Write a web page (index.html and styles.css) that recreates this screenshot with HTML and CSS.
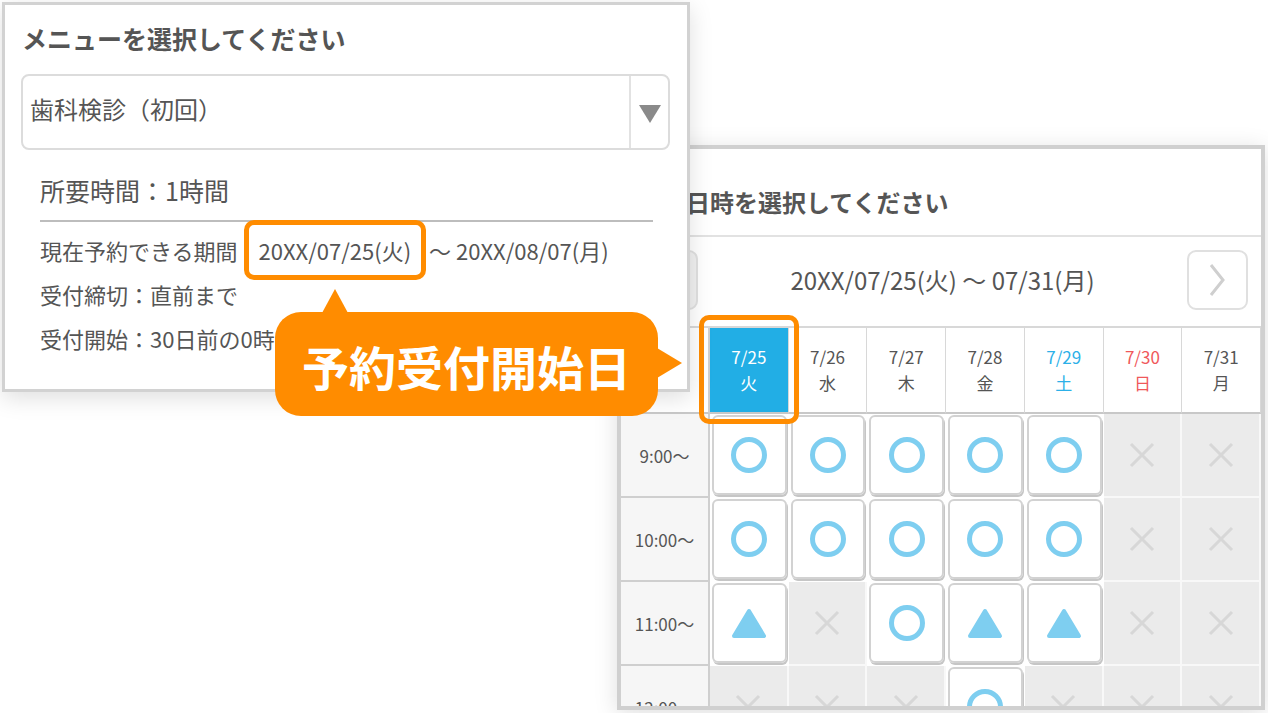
FILE: index.html
```html
<!DOCTYPE html>
<html lang="ja">
<head>
    <meta charset="UTF-8">
    <meta name="viewport" content="width=device-width, initial-scale=1.0">
    <title>予約受付開始日</title>
    <link rel="stylesheet" href="styles.css">
</head>
<body>
    <svg class="defs" width="0" height="0">
        <symbol id="maru" viewBox="0 0 40 40"><circle cx="20" cy="20" r="15.5" fill="none" stroke="#7ecef0" stroke-width="5"/></symbol>
        <symbol id="sankaku" viewBox="0 0 36 32"><path d="M18 4 L33 29 L3 29 Z" fill="#7ecef0" stroke="#7ecef0" stroke-width="4" stroke-linejoin="round"/></symbol>
        <symbol id="batsu" viewBox="0 0 26 26"><path d="M2 2 L24 24 M24 2 L2 24" stroke="#d7d7d7" stroke-width="3" fill="none"/></symbol>
    </svg>

    <div class="canvas">
        <!-- 日時選択 -->
        <section class="panel schedule">
            <h2 class="schedule-title">日時を選択してください</h2>
            <div class="week-nav">
                <button class="nav-btn prev" disabled>
                    <svg width="18" height="34" viewBox="0 0 18 34"><polyline points="15,2 3,17 15,32" fill="none" stroke="#d0d0d0" stroke-width="3"/></svg>
                </button>
                <span class="week-range">20XX/07/25(火) 〜 07/31(月)</span>
                <button class="nav-btn next">
                    <svg width="18" height="34" viewBox="0 0 18 34"><polyline points="3,2 15,17 3,32" fill="none" stroke="#cfcfcf" stroke-width="3"/></svg>
                </button>
            </div>

            <div class="grid">
                <div class="corner"></div>
                <div class="day selected">7/25<br>火</div>
                <div class="day">7/26<br>水</div>
                <div class="day">7/27<br>木</div>
                <div class="day">7/28<br>金</div>
                <div class="day sat">7/29<br>土</div>
                <div class="day sun">7/30<br>日</div>
                <div class="day">7/31<br>月</div>

                <div class="time">9:00〜</div>
                <div class="slot on"><div class="card"><svg class="ico"><use href="#maru"/></svg></div></div>
                <div class="slot on"><div class="card"><svg class="ico"><use href="#maru"/></svg></div></div>
                <div class="slot on"><div class="card"><svg class="ico"><use href="#maru"/></svg></div></div>
                <div class="slot on"><div class="card"><svg class="ico"><use href="#maru"/></svg></div></div>
                <div class="slot on"><div class="card"><svg class="ico"><use href="#maru"/></svg></div></div>
                <div class="slot off"><svg class="x"><use href="#batsu"/></svg></div>
                <div class="slot off"><svg class="x"><use href="#batsu"/></svg></div>

                <div class="time">10:00〜</div>
                <div class="slot on"><div class="card"><svg class="ico"><use href="#maru"/></svg></div></div>
                <div class="slot on"><div class="card"><svg class="ico"><use href="#maru"/></svg></div></div>
                <div class="slot on"><div class="card"><svg class="ico"><use href="#maru"/></svg></div></div>
                <div class="slot on"><div class="card"><svg class="ico"><use href="#maru"/></svg></div></div>
                <div class="slot on"><div class="card"><svg class="ico"><use href="#maru"/></svg></div></div>
                <div class="slot off"><svg class="x"><use href="#batsu"/></svg></div>
                <div class="slot off"><svg class="x"><use href="#batsu"/></svg></div>

                <div class="time">11:00〜</div>
                <div class="slot on"><div class="card"><svg class="tri"><use href="#sankaku"/></svg></div></div>
                <div class="slot off"><svg class="x"><use href="#batsu"/></svg></div>
                <div class="slot on"><div class="card"><svg class="ico"><use href="#maru"/></svg></div></div>
                <div class="slot on"><div class="card"><svg class="tri"><use href="#sankaku"/></svg></div></div>
                <div class="slot on"><div class="card"><svg class="tri"><use href="#sankaku"/></svg></div></div>
                <div class="slot off"><svg class="x"><use href="#batsu"/></svg></div>
                <div class="slot off"><svg class="x"><use href="#batsu"/></svg></div>

                <div class="time">12:00〜</div>
                <div class="slot off"><svg class="x"><use href="#batsu"/></svg></div>
                <div class="slot off"><svg class="x"><use href="#batsu"/></svg></div>
                <div class="slot off"><svg class="x"><use href="#batsu"/></svg></div>
                <div class="slot on"><div class="card"><svg class="ico"><use href="#maru"/></svg></div></div>
                <div class="slot off"><svg class="x"><use href="#batsu"/></svg></div>
                <div class="slot off"><svg class="x"><use href="#batsu"/></svg></div>
                <div class="slot off"><svg class="x"><use href="#batsu"/></svg></div>
            </div>
        </section>

        <!-- メニュー選択 -->
        <section class="panel menu">
            <h2 class="menu-title">メニューを選択してください</h2>
            <div class="select">
                <span class="select-label">歯科検診（初回）</span>
                <span class="select-arrow">
                    <svg width="22" height="18" viewBox="0 0 22 18"><polygon points="0,0 22,0 11,18" fill="#8a8a8a"/></svg>
                </span>
            </div>
            <div class="info">
                <p class="duration">所要時間：1時間</p>
                <div class="rows">
                    <p>現在予約できる期間 <span class="mark">20XX/07/25(火)</span>〜 20XX/08/07(月)</p>
                    <p>受付締切：直前まで</p>
                    <p>受付開始：30日前の0時から</p>
                </div>
            </div>
        </section>

        <div class="callout">予約受付開始日</div>
    </div>
</body>
</html>
```

FILE: styles.css
```css
* {
    box-sizing: border-box;
}
body {
    margin: 0;
    background-color: #fff;
    font-family: "Noto Sans CJK JP", "Noto Sans", sans-serif;
    color: #555;
}
.defs {
    position: absolute;
}
.canvas {
    position: relative;
    width: 1268px;
    height: 713px;
    overflow: hidden;
}
.panel {
    position: absolute;
    background-color: #fff;
}

/* メニュー選択 */
.menu {
    left: 2px;
    top: 2px;
    width: 688px;
    height: 390px;
    border: 3px solid #d2d2d2;
    box-shadow: 0 6px 22px rgba(0, 0, 0, 0.13);
    padding: 17px 17px 0 16px;
    z-index: 2;
}
.menu-title {
    margin: 0 0 20px 1px;
    font-size: 25px;
    line-height: 32px;
    font-weight: bold;
    color: #555;
}
.select {
    display: flex;
    height: 76px;
    border: 2px solid #dcdcdc;
    border-radius: 8px;
}
.select-label {
    flex: 1;
    padding-left: 7px;
    font-size: 24px;
    line-height: 66px;
}
.select-arrow {
    width: 39px;
    border-left: 2px solid #e2e2e2;
    display: flex;
    align-items: center;
    justify-content: center;
    padding-top: 4px;
}
.info {
    padding: 0 17px 0 19px;
}
.info p {
    margin: 0;
}
.duration {
    margin-top: 20px !important;
    font-size: 25px;
    line-height: 40px;
    padding-bottom: 10px;
    border-bottom: 2px solid #bdbdbd;
}
.rows {
    margin-top: 6px;
    font-size: 22px;
    line-height: 44px;
}
.mark {
    margin-left: 1px;
    margin-right: 3px;
    padding: 9px 10px 9px;
    border: 5px solid #ff8c00;
    border-radius: 10px;
}

/* 日時選択 */
.schedule {
    left: 617px;
    top: 145px;
    width: 648px;
    height: 565px;
    border: 4px solid #d0d0d0;
    box-shadow: 0 4px 22px rgba(0, 0, 0, 0.13);
    overflow: hidden;
    z-index: 1;
}
.schedule-title {
    margin: 0;
    height: 88px;
    padding: 18px 0 0 65px;
    display: flex;
    align-items: center;
    font-size: 24px;
    font-weight: bold;
    border-bottom: 2px solid #e2e2e2;
}
.week-nav {
    height: 91px;
    display: flex;
    align-items: center;
    justify-content: space-between;
    padding: 0 13px 4px 16px;
    border-bottom: 2px solid #d8d8d8;
}
.week-range {
    font-size: 24px;
    color: #555;
}
.nav-btn {
    width: 61px;
    height: 60px;
    border: 2px solid #e0e0e0;
    border-radius: 9px;
    background-color: #fff;
    display: flex;
    align-items: center;
    justify-content: center;
    padding: 0;
}
.nav-btn.prev {
    background-color: #f1f1f1;
}
.grid {
    display: grid;
    grid-template-columns: 89px repeat(7, 1fr);
    grid-template-rows: 86px;
    grid-auto-rows: 84px;
}
.corner {
    border-right: 2px solid #d0d0d0;
    border-bottom: 2px solid #c8c8c8;
}
.day {
    display: flex;
    align-items: center;
    justify-content: center;
    text-align: center;
    font-size: 17px;
    line-height: 26px;
    border-right: 1px solid #d8d8d8;
    border-bottom: 2px solid #c8c8c8;
    color: #555;
}
.day.selected {
    position: relative;
    background-color: #22aee5;
    color: #fff;
}
.day.selected::after {
    content: "";
    position: absolute;
    top: -13px;
    bottom: -12px;
    left: -11px;
    right: -11px;
    border: 5px solid #ff8c00;
    border-radius: 10px;
    z-index: 3;
}
.day.sat {
    color: #2cb0e8;
}
.day.sun {
    color: #f0585a;
}
.time {
    display: flex;
    align-items: center;
    justify-content: center;
    font-size: 17px;
    background-color: #f6f6f6;
    border-right: 2px solid #cfcfcf;
    border-bottom: 2px solid #cfcfcf;
}
.slot {
    display: flex;
    align-items: center;
    justify-content: center;
}
.slot.off {
    background-color: #ebebeb;
    border-right: 2px solid #f8f8f8;
    border-bottom: 2px solid #f8f8f8;
}
.slot.on {
    padding: 1px 2px 3px 2px;
    background-color: #fff;
}
.card {
    width: 100%;
    height: 100%;
    border: 2px solid #d2d2d2;
    border-radius: 6px;
    box-shadow: 1px 2px 0 #c6c6c6;
    display: flex;
    align-items: center;
    justify-content: center;
}
.ico {
    width: 40px;
    height: 40px;
}
.tri {
    width: 36px;
    height: 32px;
}
.x {
    width: 26px;
    height: 26px;
}

/* 吹き出し */
.callout {
    position: absolute;
    left: 275px;
    top: 312px;
    width: 383px;
    height: 104px;
    background-color: #ff8c00;
    border-radius: 26px;
    color: #fff;
    font-size: 47px;
    font-weight: bold;
    display: flex;
    align-items: center;
    justify-content: center;
    padding-top: 2px;
    z-index: 5;
}
.callout::before {
    content: "";
    position: absolute;
    left: 47px;
    top: -23px;
    border-left: 13px solid transparent;
    border-right: 13px solid transparent;
    border-bottom: 24px solid #ff8c00;
}
.callout::after {
    content: "";
    position: absolute;
    right: -24px;
    top: 36px;
    border-top: 15px solid transparent;
    border-bottom: 15px solid transparent;
    border-left: 25px solid #ff8c00;
}
```
